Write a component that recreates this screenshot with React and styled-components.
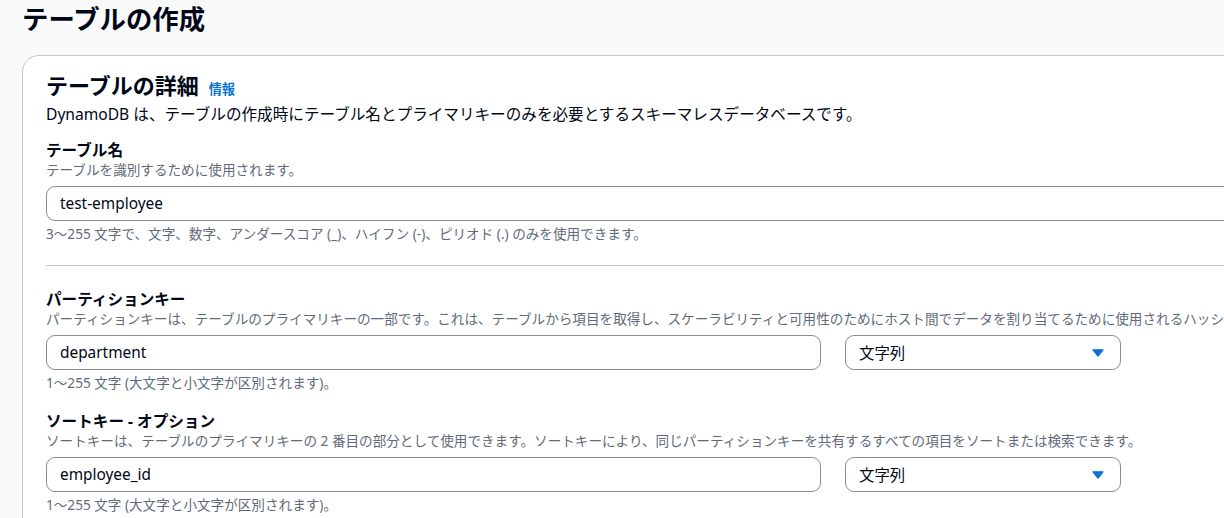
import React from "react";
import styled, { createGlobalStyle } from "styled-components";

const GlobalStyle = createGlobalStyle`
  body {
    margin: 0;
    background-color: #fafafa;
    overflow: hidden;
    font-family: "Noto Sans", "Noto Sans CJK JP", sans-serif;
    color: #000716;
  }
`;

const Page = styled.div`
  width: 1300px;
  padding: 1px 0 0 22px;
  box-sizing: border-box;
`;

const PageTitle = styled.h1`
  margin: 0;
  font-size: 26.4px;
  line-height: 37px;
  font-weight: 700;
`;

const Card = styled.section`
  margin-top: 17px;
  background-color: #ffffff;
  border: 1px solid #c6c6cd;
  border-radius: 17px;
  padding: 15px 23px 24px;
`;

const CardHeader = styled.div`
  display: flex;
  align-items: baseline;
  gap: 10px;
`;

const CardTitle = styled.h2`
  margin: 0;
  font-size: 22px;
  line-height: 28px;
  font-weight: 700;
`;

const InfoLink = styled.a`
  font-size: 13.2px;
  font-weight: 700;
  color: #0972d3;
  text-decoration: none;
`;

const CardDescription = styled.p`
  margin: 4px 0 0;
  font-size: 15.6px;
  line-height: 22px;
`;

const Field = styled.div`
  margin-top: ${(p) => p.$gap}px;
`;

const Label = styled.div`
  font-size: 15.6px;
  line-height: 22px;
  font-weight: 700;
`;

const Hint = styled.div`
  font-size: 13.6px;
  line-height: 18px;
  color: #5f6b7a;
  white-space: nowrap;
`;

const Constraint = styled(Hint)`
  margin-top: 4px;
`;

const Controls = styled.div`
  margin-top: 7px;
  display: grid;
  grid-template-columns: ${(p) => (p.$withType ? "775px 276px" : "1fr")};
  gap: 24px;
`;

const Box = styled.div`
  height: 35px;
  box-sizing: border-box;
  border: 1px solid #8c8c94;
  border-radius: 9px;
  background-color: #ffffff;
  display: flex;
  align-items: center;
  justify-content: space-between;
  padding: 0 16px 0 13px;
  font-size: 15.4px;
  color: #000716;
`;

const Divider = styled.hr`
  margin: 22px 0 0;
  border: none;
  border-top: 1px solid #c6c6cd;
`;

const Caret = () => (
  <svg width="12" height="8" viewBox="0 0 12 8">
    <path d="M1 0.8h10L6 7.2z" fill="#0972d3" stroke="#0972d3" strokeWidth="1.2" strokeLinejoin="round" />
  </svg>
);

const KeyField = ({ label, hint, value, gap }) => (
  <Field $gap={gap}>
    <Label>{label}</Label>
    <Hint>{hint}</Hint>
    <Controls $withType>
      <Box>{value}</Box>
      <Box>
        文字列
        <Caret />
      </Box>
    </Controls>
    <Constraint>1〜255 文字 (大文字と小文字が区別されます)。</Constraint>
  </Field>
);

export default function App() {
  return (
    <Page>
      <GlobalStyle />
      <PageTitle>テーブルの作成</PageTitle>
      <Card>
        <CardHeader>
          <CardTitle>テーブルの詳細</CardTitle>
          <InfoLink href="#">情報</InfoLink>
        </CardHeader>
        <CardDescription>
          DynamoDB は、テーブルの作成時にテーブル名とプライマリキーのみを必要とするスキーマレスデータベースです。
        </CardDescription>

        <Field $gap={14}>
          <Label>テーブル名</Label>
          <Hint>テーブルを識別するために使用されます。</Hint>
          <Controls>
            <Box>test-employee</Box>
          </Controls>
          <Constraint>
            3〜255 文字で、文字、数字、アンダースコア (_)、ハイフン (-)、ピリオド (.) のみを使用できます。
          </Constraint>
        </Field>

        <Divider />

        <KeyField
          gap={22}
          label="パーティションキー"
          hint="パーティションキーは、テーブルのプライマリキーの一部です。これは、テーブルから項目を取得し、スケーラビリティと可用性のためにホスト間でデータを割り当てるために使用されるハッシュ値です。"
          value="department"
        />
        <KeyField
          gap={18}
          label="ソートキー - オプション"
          hint="ソートキーは、テーブルのプライマリキーの 2 番目の部分として使用できます。ソートキーにより、同じパーティションキーを共有するすべての項目をソートまたは検索できます。"
          value="employee_id"
        />
      </Card>
    </Page>
  );
}
